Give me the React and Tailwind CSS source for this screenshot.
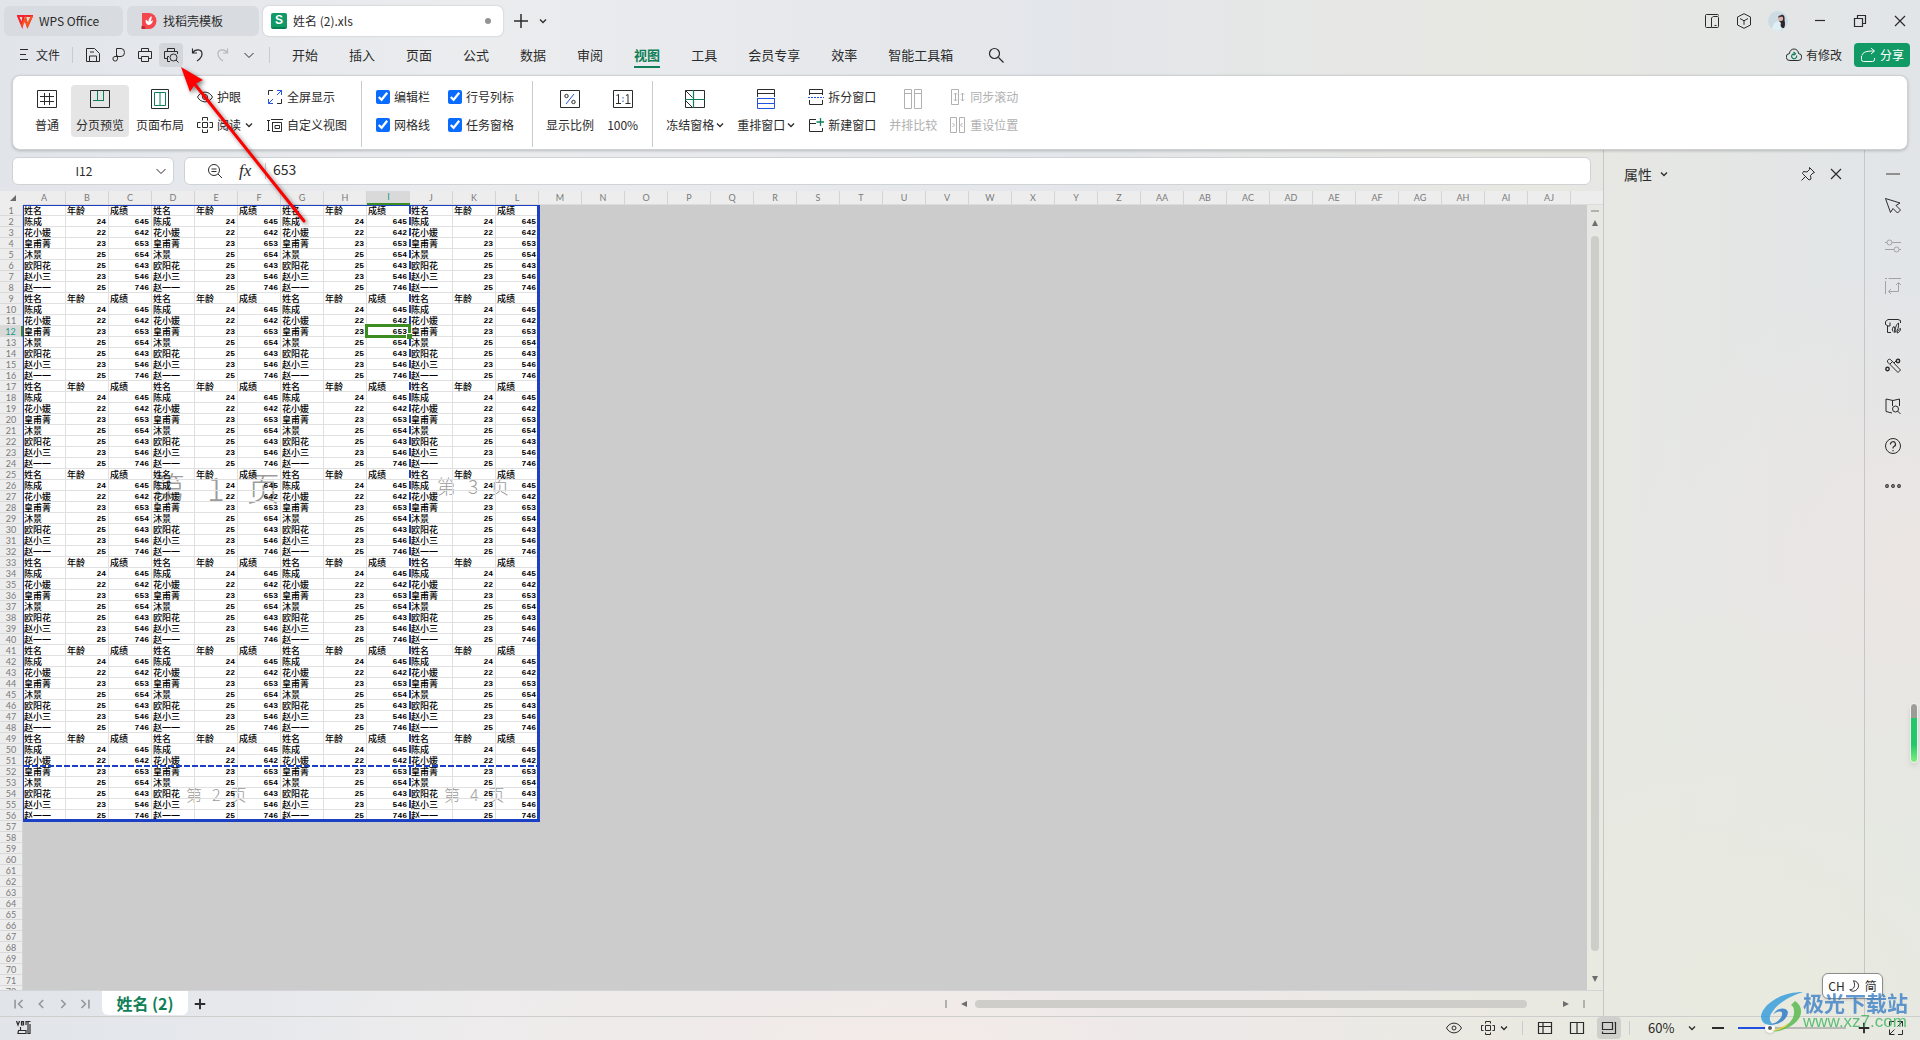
import React, { useState } from "react";

const PEOPLE = [
  ["姓名", "年龄", "成绩"],
  ["陈成", 24, 645],
  ["花小媛", 22, 642],
  ["皇甫菁", 23, 653],
  ["沐景", 25, 654],
  ["欧阳花", 25, 643],
  ["赵小三", 23, 546],
  ["赵一一", 25, 746],
];

const DATA_ROWS = 56;
const TOTAL_ROWS = 72;
const TABS = ["开始", "插入", "页面", "公式", "数据", "审阅", "视图", "工具", "会员专享", "效率", "智能工具箱"];

// A..Z, AA..AJ
const COLUMNS = Array.from({ length: 36 }, (_, i) =>
  i < 26 ? String.fromCharCode(65 + i) : "A" + String.fromCharCode(65 + i - 26)
);

function Icon({ children, className = "size-4", box = 16 }) {
  return (
    <svg
      viewBox={`0 0 ${box} ${box}`}
      className={`shrink-0 ${className}`}
      fill="none"
      stroke="currentColor"
      strokeWidth="1"
      aria-hidden="true"
    >
      {children}
    </svg>
  );
}

function Chevron({ className = "size-2" }) {
  return (
    <Icon box={8} className={className}>
      <path d="M1 2.500 4 5.500 7 2.500" strokeWidth="1.300" />
    </Icon>
  );
}

function WideChevron() {
  return (
    <Icon box={12} className="size-3">
      <path d="M1.500 4 6 8.500 10.500 4" />
    </Icon>
  );
}

function Divider({ className = "h-5" }) {
  return <span className={`w-px shrink-0 bg-[#c9cbce] ${className}`} />;
}

function BigButton({ icon, label, active, menu, disabled, className = "" }) {
  return (
    <button
      disabled={disabled}
      className={`flex flex-col items-center gap-2 rounded py-1 ${active ? "bg-[#e5e5e5]" : ""} ${disabled ? "text-[#b0b0b0]" : ""} ${className}`}
    >
      {icon}
      <span className="flex items-center gap-0.5 leading-4 whitespace-nowrap">
        {label}
        {menu && <Chevron />}
      </span>
    </button>
  );
}

function SmallButton({ icon, label, menu, disabled }) {
  return (
    <button
      disabled={disabled}
      className={`flex h-4 items-center gap-1 leading-4 whitespace-nowrap ${disabled ? "text-[#b0b0b0]" : ""}`}
    >
      {icon}
      {label}
      {menu && <Chevron />}
    </button>
  );
}

function CheckItem({ label }) {
  return (
    <label className="flex h-4 items-center gap-1 leading-4 whitespace-nowrap">
      <input type="checkbox" defaultChecked className="m-0 size-3.5 accent-[#0a6cff]" />
      {label}
    </label>
  );
}

function TitleBar() {
  return (
    <header className="flex h-10 items-center pt-0.5 pr-3 pl-1">
      <button className="flex h-[30px] w-[119px] items-center gap-1.5 rounded-md bg-[#d8dbdf] pl-[13px]">
        <Icon className="size-4">
          <path d="M1 3h5.500L5 12.500z M6.500 3H15l-4.500 10-2-5.500" stroke="#f5222d" strokeWidth="2" />
          <path d="M5 12.500 8.500 5l2 7.500L15 3" stroke="#fa541c" strokeWidth="2" />
        </Icon>
        WPS Office
      </button>
      <button className="ml-1 flex h-[30px] w-[132px] items-center gap-1.5 rounded-md bg-[#d8dbdf] pl-3.5">
        <Icon className="size-4">
          <path d="M1 0h7a7.500 8 0 0 1 0 16H1z" fill="#f5484e" stroke="none" />
          <path d="M0.500 13h3l1 3h-4z" fill="#c4262e" stroke="none" />
          <path d="M7 12C4 10 4.500 8 5 6.500 6 7.500 7 8 7.300 9 7.500 6 8.500 4.500 10.500 3c.5 3-.5 4-1 5.500 1-.8 1.500-1 2.500-1C11.500 10 10 12 7 12z" fill="#fff" stroke="none" />
        </Icon>
        找稻壳模板
      </button>
      <button className="ml-1 flex h-[30px] w-60 items-center gap-1.5 rounded-md bg-white pr-3 pl-2 shadow-[0_0_2px_#b5b8bc]">
        <span className="flex size-4 items-center justify-center rounded-xs border-b-2 border-[#087f52] bg-[#119966] font-['Liberation_Sans'] text-xs leading-3 font-bold text-white">
          S
        </span>
        <span className="flex-1 text-left">姓名 (2).xls</span>
        <span className="size-1.5 rounded-full bg-[#949494]" />
      </button>
      <button aria-label="新建" className="ml-2.5">
        <Icon className="size-4">
          <path d="M8 1v14M1 8h14" strokeWidth="1.500" />
        </Icon>
      </button>
      <button aria-label="标签列表" className="ml-2.5">
        <Chevron />
      </button>

      <div className="ml-auto flex items-center">
        <Icon className="mr-4 size-4">
          <path d="M7 14.500H2.500a1 1 0 0 1-1-1v-11a1 1 0 0 1 1-1h11a1 1 0 0 1 1 1M8.500 4.500a1 1 0 0 1 1-1h4a1 1 0 0 1 1 1v9a1 1 0 0 1-1 1h-6V4.500M10.500 12.500h2" />
        </Icon>
        <Icon className="mr-4 size-4">
          <path d="M8 .700 14.500 4v8L8 15.300 1.500 12V4zM4 5.500 8 7.800l4-2.300M8 7.800v4" />
        </Icon>
        <svg viewBox="0 0 20 20" className="mr-6 size-5" aria-hidden="true">
          <circle cx="10" cy="10" r="10" fill="#cddbe4" />
          <path d="M4 18c1-5 3-7 6-8l4 1c0 4 0 7-2 8.500-3 .5-6 0-8-1.500z" fill="#dff0f5" />
          <path d="M13 4c3-1 4 2 3.500 5 .5 3 1 5-.5 8-3 0-4-2-3-5l-2-2z" fill="#2d2430" />
          <circle cx="12.500" cy="7.500" r="2.600" fill="#d9b3a8" />
          <path d="M10 6.500C10.500 4 13 3.500 15 5l-2 1z" fill="#4a3a3c" />
        </svg>
        <button aria-label="最小化" className="mr-6">
          <Icon className="size-4"><path d="M3 7.500h10" strokeWidth="1.200" /></Icon>
        </button>
        <button aria-label="还原" className="mr-6">
          <Icon className="size-4"><path d="M2.500 5.500h8v8h-8zM5.500 5V2.500h8v8H11" strokeWidth="1.200" /></Icon>
        </button>
        <button aria-label="关闭">
          <Icon className="size-4"><path d="m3 3 10 10M13 3 3 13" strokeWidth="1.200" /></Icon>
        </button>
      </div>
    </header>
  );
}

function MenuBar({ active, onChange }) {
  return (
    <nav className="mb-[5px] flex h-[30px] items-center pr-2.5 pl-4">
      <button className="flex items-center gap-1.5">
        <Icon className="size-3.5" box={14}><path d="M4 1.500h8M4 6.500h6M4 11.500h8" strokeWidth="1.200" /></Icon>
        文件
      </button>
      <Divider className="mr-2 ml-3 h-4" />
      <div className="flex items-center gap-0.5">
        <button aria-label="保存" className="flex size-6 items-center justify-center">
          <Icon>
            <path d="M1.500 1.500h8l5 5v8h-13zM4.500 14v-5h7v5M5 5h4" />
          </Icon>
        </button>
        <button aria-label="输出为PDF" className="flex size-6 items-center justify-center">
          <Icon>
            <path d="M5.500 9V1.500H10a3.500 4 0 0 1 0 8H4a2.300 2.300 0 1 0 2.500 2.300V8.500" />
          </Icon>
        </button>
        <button aria-label="打印" className="flex size-6 items-center justify-center">
          <Icon>
            <path d="M4.500 4.500v-3h7v3M4 11.500H1.500v-7h13v7H12M4.500 9.500h7v5h-7z" />
          </Icon>
        </button>
        <button aria-label="打印预览" className="flex size-6 items-center justify-center rounded bg-[#d3d6db]">
          <Icon>
            <path d="M4.500 4.500v-3h7v3M4 11.500H1.500v-7h13V7M7 14.500H4.500v-5H6" />
            <circle cx="10.500" cy="10.500" r="3.500" />
            <path d="m13 13 2.500 2.500" />
          </Icon>
        </button>
        <button aria-label="撤销" className="flex size-6 items-center justify-center">
          <Icon><path d="M3.500 1.500v4.500h4.500M3.500 6c3-4.500 9.500-4 9.500 1 0 3-2 5-5 7" strokeWidth="1.200" /></Icon>
        </button>
        <button aria-label="恢复" disabled className="flex size-6 items-center justify-center text-[#b4b7bb]">
          <Icon><path d="M12.500 1.500v4.500H8M12.500 6C9.500 1.500 3 2 3 7c0 3 2 5 5 7" strokeWidth="1.200" /></Icon>
        </button>
        <button aria-label="更多" className="flex size-6 items-center justify-center">
          <WideChevron />
        </button>
      </div>
      <Divider className="mr-[22px] ml-2 h-4" />

      <div className="flex gap-[31px] text-[13px]">
        {TABS.map((tab) => (
          <button
            key={tab}
            onClick={() => onChange(tab)}
            className={`border-b-2 pt-0.5 leading-[22px] whitespace-nowrap ${
              tab === active ? "border-[#0f7f58] font-bold text-[#0f7f58]" : "border-transparent"
            }`}
          >
            {tab}
          </button>
        ))}
      </div>
      <Divider className="mr-2.5 ml-6" />
      <button aria-label="搜索">
        <Icon>
          <circle cx="6.500" cy="6.500" r="5" strokeWidth="1.200" />
          <path d="m10.500 10.500 5 5" strokeWidth="1.200" />
        </Icon>
      </button>

      <button className="ml-auto flex items-center gap-1">
        <Icon>
          <path d="M4 13.500a3.500 3.500 0 0 1-.5-7 4.500 4.500 0 0 1 9 0 3.500 3.500 0 0 1-.5 7z" />
          <path d="M10.500 8.500A2.500 2.500 0 1 1 8 6.800M7.500 5l2 1.800-2 1.500" stroke="#0f7f58" strokeWidth="1.200" />
        </Icon>
        有修改
      </button>
      <button className="ml-3 flex h-6 w-14 items-center justify-center gap-1 rounded bg-[#119966] text-white">
        <Icon>
          <path d="M1.500 9v3.500a2 2 0 0 0 2 2h9a2 2 0 0 0 2-2V11M2 8.500c1-3.500 4-4.500 12-4.500M11 1l3.500 3L11 7" />
        </Icon>
        分享
      </button>
    </nav>
  );
}

function Ribbon() {
  return (
    <section className="relative mr-3 ml-3 flex h-[75px] rounded-lg border border-[#cfd1d3] bg-white pt-[9px] pl-3 shadow-[0_1px_3px_rgba(0,0,0,0.2)]">
      <div className="flex items-start gap-0.5">
        <BigButton
          className="px-2.5"
          label="普通"
          icon={
            <Icon box={20} className="size-5">
              <path d="M.5 1.500h19v17H.5zM7.500 4v12M12.500 4v12M3 7.500h14M3 12.500h14" />
            </Icon>
          }
        />
        <BigButton
          className="px-[5px]"
          active
          label="分页预览"
          icon={
            <Icon box={20} className="size-5">
              <path d="M.5 1.500h19v17H.5z" />
              <path d="M7.500 2v9M13.500 2v9M3 11.500h11" stroke="#0f7f58" />
            </Icon>
          }
        />
        <BigButton
          className="px-[5px]"
          label="页面布局"
          icon={
            <Icon box={20} className="size-5">
              <path d="M1.500.500h17v19h-17z" />
              <path d="M4.500 3.500h11v13h-11zM10 3.500v13" stroke="#0f7f58" />
            </Icon>
          }
        />
      </div>
      <div className="ml-2 flex flex-col gap-3 pt-1">
        <SmallButton
          label="护眼"
          icon={
            <Icon>
              <path d="M.5 8C4 1.500 12 1.500 15.500 8 12 14.500 4 14.500.5 8z" />
              <circle cx="8" cy="8" r="2.500" />
            </Icon>
          }
        />
        <SmallButton
          label="阅读"
          menu
          icon={
            <Icon>
              <path d="M5.500 5.500h5v5h-5zM5.500 3.500v-3h5v3M5.500 12.500v3h5v-3M3.500 5.500h-3v5h3M12.500 5.500h3v5h-3" />
            </Icon>
          }
        />
      </div>
      <div className="ml-3.5 flex flex-col gap-3 pt-1">
        <SmallButton
          label="全屏显示"
          icon={
            <Icon>
              <path d="M1.500 6V1.500H6M14.500 10v4.500H10" />
              <path d="M10 1.500h4.500V6M14.500 1.500 10 6M6 14.500H1.500V10M1.500 14.500 6 10" stroke="#2353e0" />
            </Icon>
          }
        />
        <SmallButton
          label="自定义视图"
          icon={
            <Icon>
              <path d="M0 3.500h3M1.500 3.500v10M0 13.500h3M4 2.500h12M5.500 5v9.500h9V5.500h-9M8 8.500h4.500v3H8z" />
            </Icon>
          }
        />
      </div>
      <Divider className="-mt-1 mr-3.5 ml-3.5 h-[66px]" />
      <div className="flex gap-[18px] pt-1">
        <div className="flex flex-col gap-3">
          <CheckItem label="编辑栏" />
          <CheckItem label="网格线" />
        </div>
        <div className="flex flex-col gap-3">
          <CheckItem label="行号列标" />
          <CheckItem label="任务窗格" />
        </div>
      </div>
      <Divider className="-mt-1 mr-[13px] ml-[18px] h-[66px]" />
      <div className="flex items-start gap-[13px]">
        <BigButton
          label="显示比例"
          icon={
            <Icon box={20} className="size-5">
              <path d="M.5 1.500h19v17H.5z" />
              <circle cx="6.500" cy="7" r="1.700" />
              <circle cx="13.500" cy="13" r="1.700" />
              <path d="m14 5-8 10" stroke="#2353e0" />
            </Icon>
          }
        />
        <BigButton
          label="100%"
          icon={
            <Icon box={20} className="size-5">
              <path d="M.5 1.500h19v17H.5zM3.500 6.500 5.500 5.500V14M3 14.500h5M13 6.500l2-1V14M12.500 14.500h5" />
              <path d="M10 8v1.500M10 11.500V13" stroke="#2353e0" />
            </Icon>
          }
        />
      </div>
      <Divider className="-mt-1 mr-[13px] ml-3.5 h-[66px]" />
      <div className="flex items-start gap-[13px]">
        <BigButton
          label="冻结窗格"
          menu
          icon={
            <Icon box={20} className="size-5">
              <path d="M.5 1.500h19v17H.5zM.5 1.500l7 7M.5 11.500l7 7" />
              <path d="M8.500 1v18M0 10.500h20" stroke="#0f7f58" strokeWidth="1.200" />
            </Icon>
          }
        />
        <BigButton
          label="重排窗口"
          menu
          icon={
            <Icon box={20} className="size-5">
              <path d="M1.500 8V.500h17V8M1.500 4.500h17" />
              <path d="M1 9.500h18M1.500 10v9.500h17V10M1.500 14.500h17" stroke="#2353e0" />
            </Icon>
          }
        />
        <div className="flex flex-col gap-3 pt-1">
          <SmallButton
            label="拆分窗口"
            icon={
              <Icon>
                <path d="M1.500 6V.500h13V6M1.500 4.500h13M1.500 11v4.500h13V11" />
                <path d="M0 8.500h16" stroke="#2353e0" strokeDasharray="2 1" />
              </Icon>
            }
          />
          <SmallButton
            label="新建窗口"
            icon={
              <Icon>
                <path d="M8 2.500H1.500v12h13V11M1.500 6.500H8" />
                <path d="M12.500 1v8M8.500 5h8" stroke="#0f7f58" strokeWidth="1.300" />
              </Icon>
            }
          />
        </div>
        <BigButton
          label="并排比较"
          disabled
          icon={
            <Icon box={20} className="size-5">
              <path d="M1.500.500h7v19h-7zM11.500.500h7v19h-7zM1.500 4.500h7M11.500 4.500h7" />
            </Icon>
          }
        />
        <div className="flex flex-col gap-3 pt-1">
          <SmallButton
            label="同步滚动"
            disabled
            icon={
              <Icon>
                <path d="M8.500.500h-7v15h7zM5.500 4v8M4 5.500 5.500 4 7 5.500M4 10.500 5.500 12 7 10.500M12.500 4v8M11 5.500 12.500 4 14 5.500M11 10.500l1.500 1.500 1.500-1.500" />
              </Icon>
            }
          />
          <SmallButton
            label="重设位置"
            disabled
            icon={
              <Icon>
                <path d="M.5.500h6v15h-6zM9.500.500h5v15h-5zM2.500 6l2 2-2 2M12.500 6l-2 2 2 2" />
              </Icon>
            }
          />
        </div>
      </div>
    </section>
  );
}

function FormulaBar() {
  return (
    <div className="flex h-[41px] items-center gap-2.5 pr-3 pl-3">
      <div className="flex h-7 w-[162px] items-center rounded-md border border-[#d0d3d5] bg-white pr-1.5">
        <input aria-label="名称框" defaultValue="I12" className="w-full min-w-0 text-center text-xs outline-none" />
        <button aria-label="展开名称框"><WideChevron /></button>
      </div>
      <div className="flex h-7 flex-1 items-center rounded-md border border-[#d0d3d5] bg-white pl-[22px]">
        <Icon>
          <circle cx="7" cy="7" r="5.500" />
          <path d="m11 11 4 4M4.500 6h5M4.500 8.500h5" />
        </Icon>
        <span className="ml-4 w-4 font-['Liberation_Serif',serif] text-[17px] leading-5 italic">fx</span>
        <Divider className="ml-2.5 h-4" />
        <input aria-label="编辑栏" defaultValue="653" className="ml-[7px] min-w-0 flex-1 pb-1 text-sm leading-5 outline-none" />
      </div>
    </div>
  );
}

function PageMark({ page, className }) {
  return (
    <div className={`absolute flex items-center font-light text-[#9c9c9c] ${className}`}>
      <span>第</span>
      <span>{page}</span>
      <span>页</span>
    </div>
  );
}

function Sheet() {
  const rows = Array.from({ length: TOTAL_ROWS }, (_, i) => i + 1);
  return (
    <div className="relative min-w-0 flex-1 overflow-hidden bg-[#ccc]">
      {/* print area paper and page numbers sit under the cells */}
      <div className="absolute top-3.5 left-[23px] h-[616px] w-[516px] bg-white">
        <PageMark page="1" className="top-[264px] left-[129px] gap-[22px] text-[33px] leading-9" />
        <PageMark page="3" className="top-[269px] left-[414px] gap-3 text-[19px] leading-6" />
        <PageMark page="2" className="top-[577px] left-[163px] gap-2.5 text-base leading-6" />
        <PageMark page="4" className="top-[577px] left-[421px] gap-2.5 text-base leading-6" />
      </div>

      <table className="relative w-full table-fixed border-separate border-spacing-0">
        <colgroup>
          <col className="w-[23px]" />
          {COLUMNS.map((name) => (
            <col key={name} className="w-[43px]" />
          ))}
          <col />
        </colgroup>
        <thead>
          <tr className="h-3.5 bg-[#ededed] font-['Lato',sans-serif] text-[9px] leading-3 text-[#7a7a7a]">
            <th className="p-0">
              <svg viewBox="0 0 6 6" className="ml-2.5 size-1.5" aria-hidden="true">
                <path d="M6 0v6H0z" fill="#6b6b6b" />
              </svg>
            </th>
            {COLUMNS.map((name) => (
              <th
                key={name}
                className={
                  name === "I"
                    ? "h-3.5 border-b-2 border-[#3c8c22] bg-[#d9d9d9] p-0 font-normal text-[#1d9a8a]"
                    : "h-3.5 border-r border-b border-r-[#d4d4d4] border-b-[#dcdcdc] p-0 font-normal"
                }
              >
                {name}
              </th>
            ))}
            <th className="border-b border-[#dcdcdc] p-0" />
          </tr>
        </thead>
        <tbody>
          {rows.map((row) => {
            const record = PEOPLE[(row - 1) % PEOPLE.length];
            return (
              <tr key={row}>
                <th
                  className={`h-[11px] border-b border-b-[#d9d9d9] p-0 pt-px align-top font-['Lato',sans-serif] text-[9px] leading-[9px] font-normal ${
                    row === 12
                      ? "border-r-2 border-r-[#3c8c22] bg-[#d9d9d9] text-[#1d9a8a]"
                      : "border-r border-r-[#d4d4d4] bg-[#ededed] text-[#7a7a7a]"
                  }`}
                >
                  {row}
                </th>
                {row <= DATA_ROWS &&
                  COLUMNS.slice(0, 12).map((name, i) => {
                    const value = record[i % 3];
                    return typeof value === "number" ? (
                      <td
                        key={name}
                        className="h-[11px] border-r border-b border-[#e0e0e0] p-0 pt-px pr-0.5 text-right align-top font-['Liberation_Mono',monospace] text-[8px] leading-[9px] font-bold text-black"
                      >
                        {value}
                      </td>
                    ) : (
                      <td
                        key={name}
                        className="h-[11px] border-r border-b border-[#e0e0e0] p-0 pt-px pl-px align-top text-[9px] leading-[9px] font-medium whitespace-nowrap text-black"
                      >
                        {value}
                      </td>
                    );
                  })}
                <td colSpan={row <= DATA_ROWS ? 25 : 37} className="p-0" />
              </tr>
            );
          })}
        </tbody>
      </table>

      {/* page break lines */}
      <div className="pointer-events-none absolute top-3.5 left-[23px] h-[617px] w-[517px] border-t border-r-3 border-b-3 border-l border-[#1b40c4]">
        <div className="absolute top-0 left-[385px] h-full w-0.5 bg-[repeating-linear-gradient(to_bottom,#1b40c4_0_8px,#fff_8px_11px)]" />
        <div className="absolute top-[559px] left-0 h-0.5 w-full bg-[repeating-linear-gradient(to_right,#1b40c4_0_6px,#fff_6px_8px)]" />
      </div>
      {/* selected cell */}
      <div className="pointer-events-none absolute top-[133px] left-[365px] h-3.5 w-[46px] border-3 border-[#3c8c22]">
        <div className="absolute -right-1 -bottom-1 size-1.5 border-t border-l border-white bg-[#3c8c22]" />
      </div>
    </div>
  );
}

function Triangle({ className }) {
  return (
    <svg viewBox="0 0 6 6" className={`size-1.5 shrink-0 ${className}`} aria-hidden="true">
      <path d="M3 0 6 6H0z" fill="#6e6e6e" />
    </svg>
  );
}

function VerticalScroll() {
  return (
    <div className="flex w-4 flex-col items-center">
      <div className="h-3.5 w-full shrink-0 border-b border-[#dcdcdc] bg-[#ededed]" />
      <span className="mt-[5px] h-0.5 w-2 shrink-0 bg-[#b0b2ad]" />
      <Triangle className="mt-2" />
      <span className="mt-2.5 mb-[25px] w-2 flex-1 rounded-full bg-[#cdcec9]" />
      <Triangle className="mb-2 rotate-180" />
    </div>
  );
}

function SheetTabs() {
  return (
    <div className="flex h-[26px] items-center border-t border-[#d2d4d6] pr-[18px] pl-3">
      <div className="flex items-center gap-2 text-[#939699]">
        {[
          ["第一个", "M3.500 3v10M12 3.500 7.500 8l4.500 4.500"],
          ["上一个", "M10.500 3.500 6 8l4.500 4.500"],
          ["下一个", "M6 3.500 10.500 8 6 12.500"],
          ["最后一个", "M12.500 3v10M4 3.500 8.500 8 4 12.500"],
        ].map(([label, d]) => (
          <button key={label} aria-label={label}>
            <Icon className="size-3.5"><path d={d} strokeWidth="1.800" /></Icon>
          </button>
        ))}
      </div>
      <button className="ml-2.5 h-6 w-[86px] self-start rounded-b-md bg-white text-base leading-[22px] font-bold text-[#0f7f58]">
        姓名 (2)
      </button>
      <button aria-label="新建工作表" className="ml-1.5">
        <Icon className="size-3"><path d="M8 1v14M1 8h14" strokeWidth="2.500" /></Icon>
      </button>
      <div className="ml-auto flex w-160 items-center">
        <span className="h-2 w-0.5 bg-[#b3b1af]" />
        <Triangle className="ml-3.5 -rotate-90" />
        <span className="ml-2 h-2 flex-1 rounded-full bg-[#cfcdca]" />
        <Triangle className="mr-3.5 ml-9 rotate-90" />
        <span className="h-2 w-0.5 bg-[#b3b1af]" />
      </div>
    </div>
  );
}

function TaskPane() {
  return (
    <aside className="w-[261px] shrink-0 border-l border-[#c6c8c8]">
      <div className="flex items-center pt-3 pr-5 pl-5">
        <button className="flex items-center gap-2 text-sm leading-6">
          属性
          <Chevron />
        </button>
        <button aria-label="固定" className="ml-auto">
          <Icon>
            <path d="m9.500 1.500 5 5-1.500.500-2.500 2.500.5 3.500-2 1L2.500 7.500l1-2 3.500.500L9.500 3.500zM5.500 10.500 1.500 14.500" />
          </Icon>
        </button>
        <button aria-label="关闭窗格" className="ml-3">
          <Icon><path d="m3 3 10 10M13 3 3 13" strokeWidth="1.200" /></Icon>
        </button>
      </div>
    </aside>
  );
}

function SideRail() {
  return (
    <div className="flex w-14 shrink-0 flex-col items-center gap-6 border-l border-[#c6c8c8] pt-4">
      <Icon className="-mb-2 size-4"><path d="M1 8h14" stroke="#8f9090" strokeWidth="2" /></Icon>
      <Icon>
        <path d="m.5.500 14.500 4.500-4 2.500 4.500 4.500-3 3-4.500-4.500-2.500 4z" />
      </Icon>
      <Icon className="size-4 text-[#a2a4a4]">
        <circle cx="4.500" cy="4.500" r="2.500" />
        <circle cx="11.500" cy="11.500" r="2.500" />
        <path d="M0 4.500h2M7 4.500h9M0 11.500h9M14 11.500h2" />
      </Icon>
      <Icon className="size-4 text-[#a2a4a4]">
        <path d="M0 .5h2M3.500.500H16M.5 3v13M13.500 5v8.500H4M11 7l2.500-2.500L16 7M6 11l-2.500 2.500L6 16" />
      </Icon>
      <Icon>
        <path d="M15.500 5V2.500L13 1.500H3L.5 3.500v3L3 8h2M2.500 8v6.500H6M5 4.500V8M8 13.500c-1.500-2 0-5 1-5 1.200 2 1 4 0 6M10 14.500C10 9 12 5.500 13.500 5c.5 4-.5 7-3.500 9.500M12 15c.5-2.500 2-4 3.500-4.500 0 2-1 4-3.500 4.500z" />
      </Icon>
      <Icon>
        <path d="m5.500 1.500 10 10.500-2.500 2.500L2.500 4c-.5-2 1.500-3.500 3-2.500zM7.500 3.500 5 6" />
        <circle cx="13" cy="3" r="1.700" strokeWidth="1.400" />
        <circle cx="2.500" cy="11" r="1.700" strokeWidth="1.400" />
        <path d="m9 5 2-2" />
      </Icon>
      <Icon>
        <path d="M8 2.500 14.500 1v7M8 2.500 1 1v12.500l6 1.500M7.500 2.500V8" />
        <circle cx="10.500" cy="11" r="3" />
        <path d="m12.500 13 3 3" />
      </Icon>
      <Icon>
        <circle cx="8" cy="8" r="7.500" />
        <path d="M5.500 6.500a2.500 2.500 0 1 1 3.500 2c-.8.400-1 .8-1 1.500v.5M8 12v1.200" strokeWidth="1.200" />
      </Icon>
      <Icon>
        <circle cx="2" cy="8" r="1.300" strokeWidth="1.200" />
        <circle cx="8" cy="8" r="1.300" strokeWidth="1.200" />
        <circle cx="14" cy="8" r="1.300" strokeWidth="1.200" />
      </Icon>
    </div>
  );
}

function StatusBar() {
  return (
    <footer className="flex h-6 items-center border-t border-[#cdcdcc] pr-4 pb-px pl-4">
      <Icon className="size-4">
        <path d="M.5 1 2 5l1.500-4M5.500 1.500v3.500h2V1.500zM5.500 3h2M10 5V1.500h4.500M12 1.500v12h2V4M4.500 7v3M2.500 10.500h7.500v3h-8z" strokeWidth="1.200" />
      </Icon>
      <div className="ml-auto flex h-full items-center">
        <button aria-label="护眼模式">
          <Icon>
            <path d="M.5 8C4 1.500 12 1.500 15.500 8 12 14.500 4 14.500.5 8z" />
            <circle cx="8" cy="8" r="2" />
          </Icon>
        </button>
        <button aria-label="阅读模式" className="ml-[18px] flex items-center gap-1">
          <Icon>
            <path d="M5.500 5.500h5v5h-5zM5.500 3.500V1.500h5v2M5.500 12.500v2h5v-2M3.500 5.500h-2v5h2M12.500 5.500h2v5h-2" />
          </Icon>
          <Chevron />
        </button>
        <Divider className="mr-3.5 ml-3.5 h-3.5" />
        <button aria-label="普通视图">
          <Icon><path d="M1.500 2.500h13v11h-13zM1.500 6.500h13M6 2.500v11" strokeWidth="1.200" /></Icon>
        </button>
        <button aria-label="页面布局视图" className="ml-4">
          <Icon><path d="M1.500 2.500h13v11h-13zM8 2.500v11" strokeWidth="1.200" /></Icon>
        </button>
        <button aria-label="分页预览视图" className="ml-3 flex h-full w-6 items-center justify-center rounded bg-[#cfd0cb]">
          <Icon><path d="M1.500 2.500h10v7h-10zM1.500 11.500v2H14.500v-11h-1" strokeWidth="1.200" /></Icon>
        </button>
        <Divider className="ml-2 h-3.5" />
        <label className="ml-[18px] flex items-center">
          <span className="sr-only">缩放比例</span>
          <select defaultValue="60%" className="w-10 appearance-none text-[13px] leading-4 outline-none">
            <option>60%</option>
            <option>100%</option>
          </select>
          <Chevron />
        </label>
        <button aria-label="缩小" className="ml-3.5">
          <Icon className="size-4"><path d="M2 8h12" strokeWidth="2" /></Icon>
        </button>
        <input
          type="range"
          min="0"
          max="100"
          defaultValue="28"
          aria-label="缩放"
          className="mx-3 h-0.5 w-[108px] appearance-none bg-[linear-gradient(to_right,#1f50e0_30%,#b9bab5_30%)] [&::-webkit-slider-thumb]:size-2.5 [&::-webkit-slider-thumb]:appearance-none [&::-webkit-slider-thumb]:rounded-full [&::-webkit-slider-thumb]:border-3 [&::-webkit-slider-thumb]:border-white [&::-webkit-slider-thumb]:bg-[#5c5c5c] [&::-webkit-slider-thumb]:shadow"
        />
        <button aria-label="放大" className="mr-[18px]">
          <Icon className="size-3"><path d="M8 1v14M1 8h14" strokeWidth="2.500" /></Icon>
        </button>
        <button aria-label="全屏">
          <Icon><path d="M1.500 6V1.500H6M10 14.500h4.500V10M9.500 1.500h5v5M14.500 1.500l-5 5M1.500 9.500v5h5M1.500 14.500l5-5" /></Icon>
        </button>
      </div>
    </footer>
  );
}

function Overlays() {
  return (
    <>
      {/* red pointer towards print preview */}
      <svg
        viewBox="0 0 140 170"
        className="pointer-events-none absolute top-[60px] left-[175px] h-[170px] w-[140px] drop-shadow-[2px_2px_2px_rgba(0,0,0,0.5)]"
        aria-hidden="true"
      >
        <path d="M18 22 129 161" stroke="#f00" strokeWidth="3" strokeLinecap="round" />
        <path d="M6 7 28 20 20 24 15 32z" fill="#f00" />
      </svg>

      <div className="absolute right-[37px] bottom-[41px] flex h-[26px] w-[61px] items-center justify-center gap-1 rounded-md border border-[#8c8c8c] bg-white text-xs shadow">
        CH
        <Icon className="size-3"><path d="M6 1c9 1 9 12 0 14-2 0-4-1-5-2 6 0 8-6 5-12z" strokeWidth="1.300" /></Icon>
        简
      </div>

      <div className="pointer-events-none absolute right-3 bottom-2 flex items-center opacity-80">
        <svg viewBox="0 0 42 40" className="h-10 w-[42px]" aria-hidden="true">
          <path d="M42 0C20 0 2 12 0 24c0 8 7 10 14 9-6-2-7-8-2-14C18 10 30 4 42 0z" fill="#2f9bdc" />
          <path d="M34 9c10 6 8 20-8 27-6 3-12 4-14 3 12-3 22-10 21-20 0-3-1-5-3-6z" fill="#53b848" />
          <path d="M8 32c8 2 18-3 19-12-2-6-12-4-15 3 2-3 8-5 9-2 1 5-6 11-13 11z" fill="#2476c7" />
          <path d="M10 39c4-2 12-3 17-8-1 4-8 8-17 8z" fill="#e9cf2b" />
        </svg>
        <div className="leading-5">
          <div className="text-[21px] font-bold text-[#3b7fc6]">极光下载站</div>
          <div className="font-['Liberation_Sans',sans-serif] text-[17px] text-[#3bb45c]">www.xz7.com</div>
        </div>
      </div>

      <div className="absolute top-[703px] right-0.5 h-[60px] w-2 rounded-full border border-[#f1f1ee] bg-[linear-gradient(to_bottom,#9d9d98_24%,#22c96a_24%_70%,#7df07c)] shadow-md" />
    </>
  );
}

export default function App() {
  const [tab, setTab] = useState("视图");

  return (
    <div className="relative flex h-screen w-full flex-col overflow-hidden bg-[radial-gradient(ellipse_35%_20%_at_48%_100%,#f3ebe8,transparent),radial-gradient(ellipse_30%_40%_at_92%_95%,#e9eadf,transparent),radial-gradient(ellipse_15%_30%_at_100%_55%,#ece6e3,transparent),linear-gradient(to_right,#e1e5ea,#ebecee_25%,#e3e6ea_55%,#e8e8e2_80%,#e1e5e8)] font-['Noto_Sans_CJK_SC',sans-serif] text-xs text-[#2b2b2b]">
      <TitleBar />
      <MenuBar active={tab} onChange={setTab} />
      <Ribbon />
      <div className="flex min-h-0 flex-1">
        <main className="flex min-w-0 flex-1 flex-col">
          <FormulaBar />
          <div className="flex min-h-0 flex-1">
            <Sheet />
            <VerticalScroll />
          </div>
          <SheetTabs />
        </main>
        <TaskPane />
        <SideRail />
      </div>
      <StatusBar />
      <Overlays />
    </div>
  );
}
